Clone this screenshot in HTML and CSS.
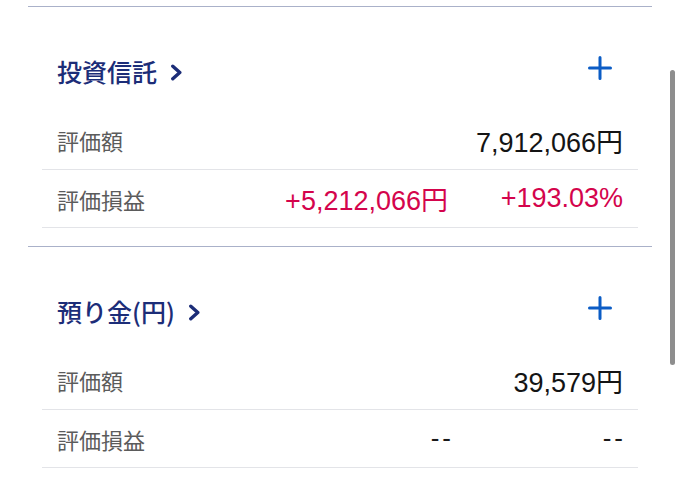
FILE: index.html
```html
<!DOCTYPE html>
<html lang="ja">
<head>
<meta charset="utf-8">
<link rel="stylesheet" href="styles.css">
</head>
<body>
<div class="page">
  <section class="asset">
    <div class="asset-head">
      <a class="asset-title">投資信託<svg class="chev" width="13" height="17" viewBox="0 0 13 17"><path d="M2.8 2.2 L9.8 8.5 L2.8 14.8" fill="none" stroke="#1c2d78" stroke-width="3.4" stroke-linecap="round" stroke-linejoin="round"/></svg></a>
      <button class="plus"><svg width="24" height="24" viewBox="0 0 24 24"><path d="M12 1.5 V22.5 M1.5 12 H22.5" stroke="#0b5cc5" stroke-width="3" stroke-linecap="round"/></svg></button>
    </div>
    <div class="rows">
      <div class="row"><span class="label">評価額</span><span class="val">7,912,066円</span></div>
      <div class="row"><span class="label">評価損益</span><span class="val red amt">+5,212,066円</span><span class="val red pct">+193.03%</span></div>
    </div>
  </section>
  <section class="asset">
    <div class="asset-head">
      <a class="asset-title">預り金(円)<svg class="chev" width="13" height="17" viewBox="0 0 13 17"><path d="M2.8 2.2 L9.8 8.5 L2.8 14.8" fill="none" stroke="#1c2d78" stroke-width="3.4" stroke-linecap="round" stroke-linejoin="round"/></svg></a>
      <button class="plus"><svg width="24" height="24" viewBox="0 0 24 24"><path d="M12 1.5 V22.5 M1.5 12 H22.5" stroke="#0b5cc5" stroke-width="3" stroke-linecap="round"/></svg></button>
    </div>
    <div class="rows">
      <div class="row"><span class="label">評価額</span><span class="val">39,579円</span></div>
      <div class="row"><span class="label">評価損益</span><span class="val amt dash">--</span><span class="val pct dash">--</span></div>
    </div>
  </section>
</div>
<div class="scrollbar"></div>
</body>
</html>
```
FILE: styles.css
```css
html, body {
  margin: 0;
  padding: 0;
  background: #ffffff;
  overflow: hidden;
}
body {
  font-family: "Noto Sans CJK JP", "Noto Sans", sans-serif;
  width: 680px;
  height: 481px;
  position: relative;
}
.page {
  padding: 6px 0 0 28px;
  width: 624px;
}
.asset {
  border-top: 1.5px solid #aab1c9;
  padding: 0 14px 18px 14px;
}
.asset-head {
  display: flex;
  align-items: center;
  justify-content: space-between;
  padding: 40px 15px 16px 15px;
  height: 48px;
}
.asset-title {
  display: flex;
  align-items: center;
  font-size: 25px;
  font-weight: 500;
  color: #1c2d78;
  line-height: 48px;
}
.chev {
  margin-left: 13px;
  margin-top: 3px;
}
.plus {
  width: 46px;
  height: 46px;
  border: 0;
  background: none;
  padding: 0;
  display: flex;
  align-items: center;
  justify-content: center;
  margin-top: -6px;
}
.rows {
  display: flex;
  flex-direction: column;
}
.row {
  display: flex;
  align-items: center;
  height: 57px;
  padding: 0 15px;
  border-bottom: 1.5px solid #e3e4e8;
}
.row:first-child {
  height: 58px;
}
.label {
  color: #5b5b5b;
  flex: 1;
  font-size: 22px;
}
.val {
  color: #141414;
  font-family: "Liberation Sans", "Noto Sans CJK JP", sans-serif;
  font-size: 27px;
}
.red {
  color: #d4044c;
}
.pct {
  width: 175px;
  text-align: right;
}
.dash {
  font-size: 26px;
  letter-spacing: 3px;
  margin-right: -3px;
  color: #1a1a1a;
}
.scrollbar {
  position: absolute;
  left: 670px;
  top: 70px;
  width: 4.5px;
  height: 295px;
  border-radius: 3px;
  background: #8e8e8e;
}
```
